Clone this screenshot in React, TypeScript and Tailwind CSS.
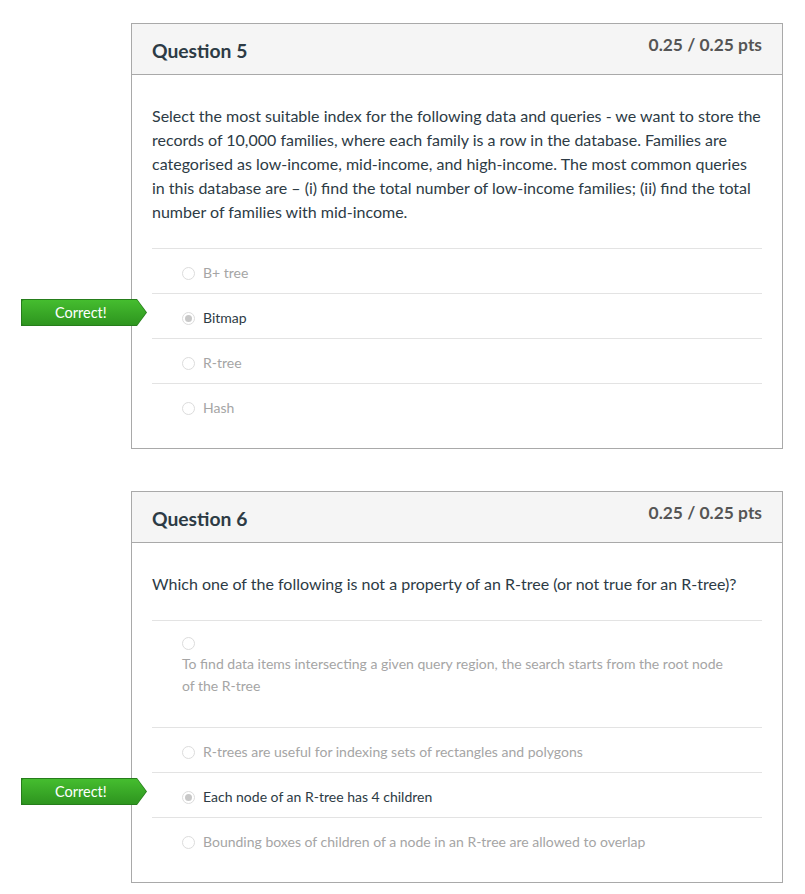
import React from "react";

type Answer = { text: string; selected?: boolean; wrap?: boolean };

type Question = {
  title: string;
  points: string;
  text: string;
  answers: Answer[];
};

const questions: Question[] = [
  {
    title: "Question 5",
    points: "0.25 / 0.25 pts",
    text: "Select the most suitable index for the following data and queries - we want to store the records of 10,000 families, where each family is a row in the database. Families are categorised as low-income, mid-income, and high-income. The most common queries in this database are \u2013 (i) find the total number of low-income families; (ii) find the total number of families with mid-income.",
    answers: [
      { text: "B+ tree" },
      { text: "Bitmap", selected: true },
      { text: "R-tree" },
      { text: "Hash" },
    ],
  },
  {
    title: "Question 6",
    points: "0.25 / 0.25 pts",
    text: "Which one of the following is not a property of an R-tree (or not true for an R-tree)?",
    answers: [
      {
        text: "To find data items intersecting a given query region, the search starts from the root node of the R-tree",
        wrap: true,
      },
      { text: "R-trees are useful for indexing sets of rectangles and polygons" },
      { text: "Each node of an R-tree has 4 children", selected: true },
      { text: "Bounding boxes of children of a node in an R-tree are allowed to overlap" },
    ],
  },
];

const Radio = ({ selected }: { selected?: boolean }) => (
  <span className="inline-flex items-center justify-center w-[13px] h-[13px] rounded-full border border-[#dcdcdc] bg-white">
    {selected && <span className="w-[7px] h-[7px] rounded-full bg-[#c8c8c8]" />}
  </span>
);

// green "Correct!" flag hanging left of the card
const CorrectTag = () => (
  <div className="absolute left-[21px] top-[6px] w-[126px] h-[27px] [clip-path:polygon(0_0,116px_0,126px_50%,116px_100%,0_100%)] bg-[#267d1b]">
    <div className="absolute inset-[1px] rounded-l-[2px] [clip-path:polygon(0_0,115px_0,124px_50%,115px_100%,0_100%)] bg-gradient-to-b from-[#45bd2f] to-[#2e951f] flex items-center pl-[33px] text-white text-[14.5px]">
      Correct!
    </div>
  </div>
);

const AnswerRow = ({ answer }: { answer: Answer }) => {
  const color = answer.selected ? "text-[#2d3b45]" : "text-[#a5a5a5]";
  return (
    <div className="relative">
      {answer.selected && (
        <div className="absolute left-[-132px] top-0 bottom-0">
          <CorrectTag />
        </div>
      )}
      <div className="border-t border-[#e3e3e3] mx-[20px]">
        {answer.wrap ? (
          <div className={`pl-[30px] pr-[30px] pt-[13px] pb-[30px] text-[14px] leading-[22px] ${color}`}>
            <div className="h-[19px] flex items-center">
              <Radio selected={answer.selected} />
            </div>
            <div>{answer.text}</div>
          </div>
        ) : (
          <div className={`pl-[30px] pt-[13px] pb-[9px] flex items-center gap-[8px] text-[14px] leading-[22px] ${color}`}>
            <Radio selected={answer.selected} />
            <span>{answer.text}</span>
          </div>
        )}
      </div>
    </div>
  );
};

const QuestionCard = ({ q }: { q: Question }) => (
  <div className="ml-[131px] w-[652px] border border-[#a9a9a9] bg-white">
    <div className="bg-[#f5f5f5] border-b border-[#a9a9a9] h-[51px] flex justify-between px-[20px]">
      <h2 className="pt-[16px] text-[19.3px] font-bold text-[#2d3b45] leading-[22px]">{q.title}</h2>
      <div className="pt-[10px] text-[17.4px] font-bold text-[#555] leading-[22px]">{q.points}</div>
    </div>
    <div className="pt-[29px] pb-[20px]">
      <p className="px-[20px] text-[16px] leading-[24px] text-[#2d3b45] mb-[24px]">{q.text}</p>
      {q.answers.map((a, i) => (
        <AnswerRow key={i} answer={a} />
      ))}
    </div>
  </div>
);

export default function App() {
  return (
    <div className="min-h-[894px] bg-white pt-[23px] font-['Lato',sans-serif] relative">
      <div className="flex flex-col gap-[42px]">
        {questions.map((q) => (
          <QuestionCard key={q.title} q={q} />
        ))}
      </div>
    </div>
  );
}
